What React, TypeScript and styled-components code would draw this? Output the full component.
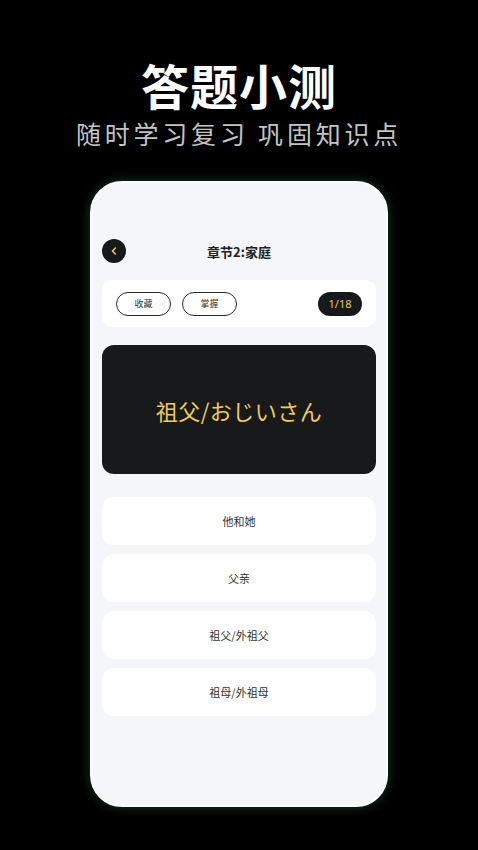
import React from 'react'
import styled, { createGlobalStyle } from 'styled-components'

const GlobalStyle = createGlobalStyle`
  html, body {
    margin: 0;
    padding: 0;
    background: #000;
  }
  body {
    font-family: "Noto Sans CJK SC", "Noto Sans", sans-serif;
  }
`

const Page = styled.div`
  width: 478px;
  height: 850px;
  background: #000;
  display: flex;
  flex-direction: column;
  align-items: center;
  overflow: hidden;
`

const Headline = styled.h1`
  margin: 50px 0 0;
  font-size: 48px;
  line-height: 68px;
  font-weight: 700;
  letter-spacing: 1px;
  color: #fff;
`

const Tagline = styled.p`
  margin: -2px 0 0;
  font-size: 25px;
  line-height: 34px;
  letter-spacing: 3.8px;
  color: #c4c4c4;
`

const Phone = styled.div`
  box-sizing: border-box;
  margin-top: 31px;
  width: 298px;
  height: 626px;
  border: 2px solid #fbfcfd;
  border-radius: 32px;
  background: #f4f6f9;
  box-shadow: 0 0 10px 2px rgba(40, 90, 55, 0.45);
  padding: 56px 10px 0;
  display: flex;
  flex-direction: column;
`

const NavBar = styled.div`
  position: relative;
  height: 24px;
  display: flex;
  align-items: center;
  justify-content: center;
`

const BackButton = styled.div`
  position: absolute;
  left: 0;
  top: 0;
  width: 24px;
  height: 24px;
  border-radius: 50%;
  background: #17181a;
  display: flex;
  align-items: center;
  justify-content: center;
`

const NavTitle = styled.div`
  font-size: 13px;
  font-weight: 700;
  color: #222;
`

const Toolbar = styled.div`
  margin-top: 17px;
  height: 47px;
  background: #fff;
  border-radius: 10px;
  padding: 0 14px;
  display: flex;
  align-items: center;
  gap: 11px;
`

const Pill = styled.div`
  width: 53px;
  height: 22px;
  border: 1px solid #2a2a2a;
  border-radius: 12px;
  display: flex;
  align-items: center;
  justify-content: center;
  font-size: 9px;
  color: #333;
`

const Counter = styled.div`
  margin-left: auto;
  width: 44px;
  height: 24px;
  border-radius: 12px;
  background: #17181a;
  color: #e9c85b;
  font-family: "Noto Sans", sans-serif;
  font-size: 11px;
  display: flex;
  align-items: center;
  justify-content: center;
`

const WordCard = styled.div`
  margin-top: 18px;
  height: 129px;
  border-radius: 12px;
  background: #18191b;
  display: flex;
  align-items: center;
  justify-content: center;
  font-size: 22px;
  color: #efcc5a;
  letter-spacing: 0.5px;
`

const Options = styled.div`
  margin-top: 23px;
  display: flex;
  flex-direction: column;
  gap: 9px;
`

const Option = styled.div`
  height: 48px;
  border-radius: 12px;
  background: #fff;
  display: flex;
  align-items: center;
  justify-content: center;
  font-size: 11px;
  color: #333;
`

const options = ['他和她', '父亲', '祖父/外祖父', '祖母/外祖母']

export default function App() {
  return (
    <Page>
      <GlobalStyle />
      <Headline>答题小测</Headline>
      <Tagline>随时学习复习 巩固知识点</Tagline>
      <Phone>
        <NavBar>
          <BackButton>
            <svg width="10" height="10" viewBox="0 0 10 10">
              <path d="M6.3 2 L3.5 5 L6.3 8" fill="none" stroke="#e9c85b" strokeWidth="1.6" strokeLinecap="round" strokeLinejoin="round" />
            </svg>
          </BackButton>
          <NavTitle>章节2:家庭</NavTitle>
        </NavBar>
        <Toolbar>
          <Pill>收藏</Pill>
          <Pill>掌握</Pill>
          <Counter>1/18</Counter>
        </Toolbar>
        <WordCard>祖父/おじいさん</WordCard>
        <Options>
          {options.map((o) => (
            <Option key={o}>{o}</Option>
          ))}
        </Options>
      </Phone>
    </Page>
  )
}
